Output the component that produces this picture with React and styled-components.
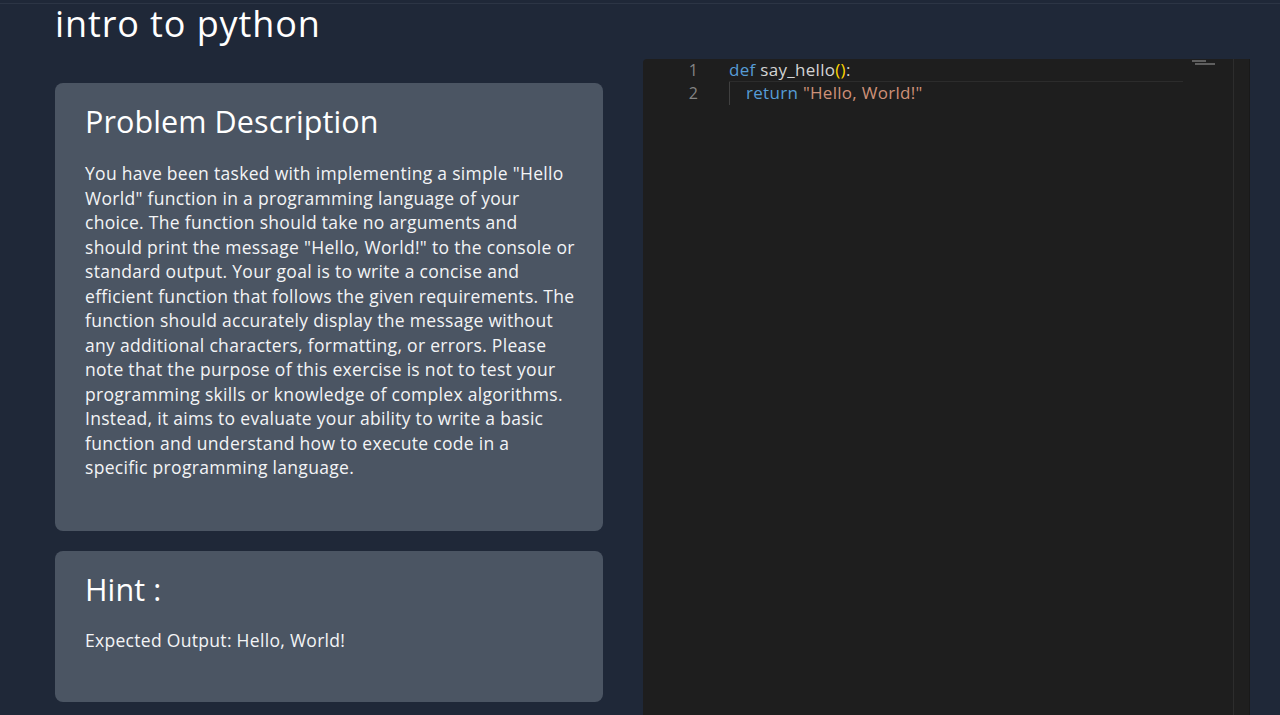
import styled, { createGlobalStyle } from "styled-components"

const GlobalStyle = createGlobalStyle`
* { box-sizing: border-box; }
html, body {
  margin: 0;
  padding: 0;
  background: #1f2838;
  font-family: "Open Sans", "Liberation Sans", sans-serif;
  color: #fff;
  overflow: hidden;
}
`

const description = [
  'You have been tasked with implementing a simple "Hello',
  'World" function in a programming language of your',
  "choice. The function should take no arguments and",
  'should print the message "Hello, World!" to the console or',
  "standard output. Your goal is to write a concise and",
  "efficient function that follows the given requirements. The",
  "function should accurately display the message without",
  "any additional characters, formatting, or errors. Please",
  "note that the purpose of this exercise is not to test your",
  "programming skills or knowledge of complex algorithms.",
  "Instead, it aims to evaluate your ability to write a basic",
  "function and understand how to execute code in a",
  "specific programming language.",
]

const Page = styled.div`
width: 1280px;
height: 715px;
overflow: hidden;
background: #1f2838;
`
const TopRule = styled.div`
height: 4px;
border-bottom: 1px solid #2c3545;
`
const Title = styled.h1`
margin: 0;
padding-left: 55px;
font-size: 36px;
line-height: 39px;
font-weight: 500;
letter-spacing: 0.9px;
color: #fff;
`
const Main = styled.div`
display: grid;
grid-template-columns: 548px 607px;
column-gap: 40px;
padding-left: 55px;
margin-top: 16px;
`
const Column = styled.div`
display: flex;
flex-direction: column;
gap: 20px;
padding-top: 24px;
`
const Card = styled.section`
background: #4b5563;
border-radius: 8px;
padding: ${(p) => p.$pad};
min-height: ${(p) => p.$minHeight || "auto"};
`
const CardTitle = styled.h2`
margin: 0 0 ${(p) => p.$gap};
font-size: 30.5px;
line-height: 40px;
font-weight: 500;
letter-spacing: 0.1px;
color: #fff;
`
const Text = styled.p`
margin: 0;
font-size: 17.5px;
line-height: 24.5px;
letter-spacing: 0.3px;
white-space: nowrap;
color: #f3f4f6;
`

const Editor = styled.div`
height: 660px;
background: #1e1e1e;
border-radius: 4px 4px 0 0;
display: flex;
font-family: "Open Sans", "Liberation Sans", sans-serif;
font-size: 17px;
letter-spacing: 0.3px;
`
const Gutter = styled.div`
width: 86px;
display: flex;
flex-direction: column;
align-items: flex-end;
padding-right: 31px;
color: #858585;
font-size: 16px;
letter-spacing: 0;
`
const LineNo = styled.div`
height: 23px;
line-height: 23px;
`
const Code = styled.div`
flex: 1;
display: flex;
flex-direction: column;
`
const Line = styled.div`
height: 23px;
line-height: 22px;
white-space: pre;
color: #d4d4d4;
border-bottom: ${(p) => (p.$current ? "1px solid #2c2c2c" : "none")};
`
const Indent = styled.span`
display: inline-block;
width: 17px;
height: 23px;
vertical-align: top;
border-left: 1px solid #404040;
`
const Kw = styled.span`
color: #569cd6;
`
const Bracket = styled.span`
color: #ffd700;
`
const Str = styled.span`
color: #ce9178;
`
const Minimap = styled.div`
width: 50px;
padding: 1px 0 0 9px;
display: flex;
flex-direction: column;
gap: 1px;
`
const MiniBar = styled.div`
height: 2px;
width: ${(p) => p.$w}px;
margin-left: ${(p) => p.$x || 0}px;
background: #8a8a8a;
opacity: 0.6;
`
const Scrollbar = styled.div`
width: 17px;
border-left: 1px solid #2d2d2d;
background: #1f1f1f;
border-right: 1px solid #191919;
`

export default function App() {
  return (
    <Page>
      <GlobalStyle />
      <TopRule />
      <Title>intro to python</Title>
      <Main>
        <Column>
          <Card $pad="18px 30px 51px" $minHeight="447px">
            <CardTitle $gap="20px">Problem Description</CardTitle>
            <Text>
              {description.map((line, i) => (
                <span key={i}>
                  {line}
                  {i < description.length - 1 && <br />}
                </span>
              ))}
            </Text>
          </Card>
          <Card $pad="18px 30px 30px" $minHeight="151px">
            <CardTitle $gap="19px">Hint :</CardTitle>
            <Text>Expected Output: Hello, World!</Text>
          </Card>
        </Column>
        <Editor>
          <Gutter>
            <LineNo>1</LineNo>
            <LineNo>2</LineNo>
          </Gutter>
          <Code>
            <Line $current>
              <Kw>def</Kw> say_hello<Bracket>()</Bracket>:
            </Line>
            <Line>
              <Indent />
              <Kw>return</Kw> <Str>"Hello, World!"</Str>
            </Line>
          </Code>
          <Minimap>
            <MiniBar $w={14} />
            <MiniBar $w={20} $x={3} />
          </Minimap>
          <Scrollbar />
        </Editor>
      </Main>
    </Page>
  )
}
